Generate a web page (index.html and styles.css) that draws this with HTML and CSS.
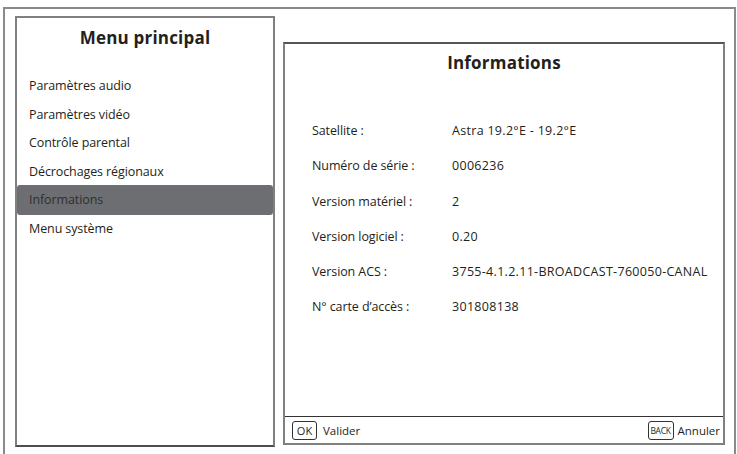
FILE: index.html
```html
<!DOCTYPE html>
<html lang="fr">
<head>
<meta charset="utf-8">
<title>Menu principal</title>
<link rel="stylesheet" href="styles.css">
</head>
<body>
<div class="frame">
  <div class="menu-panel">
    <div class="menu-title">Menu principal</div>
    <ul class="menu-list">
      <li class="menu-item">Paramètres audio</li>
      <li class="menu-item">Paramètres vidéo</li>
      <li class="menu-item">Contrôle parental</li>
      <li class="menu-item">Décrochages régionaux</li>
      <li class="menu-item active">Informations</li>
      <li class="menu-item">Menu système</li>
    </ul>
  </div>
  <div class="info-panel">
    <div class="info-body">
      <div class="info-title">Informations</div>
      <div class="rows">
        <div class="row"><span class="label">Satellite :</span><span class="value">Astra 19.2°E - 19.2°E</span></div>
        <div class="row"><span class="label">Numéro de série :</span><span class="value">0006236</span></div>
        <div class="row"><span class="label">Version matériel :</span><span class="value">2</span></div>
        <div class="row"><span class="label">Version logiciel :</span><span class="value">0.20</span></div>
        <div class="row"><span class="label">Version ACS :</span><span class="value">3755-4.1.2.11-BROADCAST-760050-CANAL</span></div>
        <div class="row"><span class="label">N° carte d’accès :</span><span class="value">301808138</span></div>
      </div>
    </div>
    <div class="footer">
      <div class="action"><span class="key key-ok">OK</span><span class="action-label">Valider</span></div>
      <div class="action"><span class="key key-back">BACK</span><span class="action-label">Annuler</span></div>
    </div>
  </div>
</div>
</body>
</html>
```
FILE: styles.css
```css
html, body {
  margin: 0;
  padding: 0;
  background: #ffffff;
}
body {
  font-family: "Open Sans", "Liberation Sans", sans-serif;
  color: #231f20;
  width: 737px;
  height: 454px;
  overflow: hidden;
}
.frame {
  box-sizing: border-box;
  margin: 7px 0 0 3px;
  width: 733px;
  height: 460px;
  border: 2px solid #8a8a8a;
  border-bottom: none;
  display: flex;
  align-items: flex-start;
  gap: 8px;
  padding: 7px 0 0 10px;
}
.menu-panel {
  box-sizing: border-box;
  width: 260px;
  height: 431px;
  border: 2px solid #808080;
  border-bottom-color: #4d4d4d;
}
.menu-title {
  font-weight: 700;
  font-size: 17px;
  text-align: center;
  height: 40px;
  line-height: 40px;
  letter-spacing: 0.2px;
}
.menu-list {
  list-style: none;
  margin: 0;
  padding: 14px 0 0 0;
}
.menu-item {
  font-size: 12.5px;
  height: 28.5px;
  line-height: 28.5px;
  padding-left: 12px;
  letter-spacing: -0.1px;
}
.menu-item.active {
  background: #6d6e71;
  color: #2e2e30;
  border-radius: 3px;
  height: 30px;
  line-height: 30px;
  margin: -1.5px 0 0 0;
}
.info-panel {
  box-sizing: border-box;
  margin-top: 26px;
  width: 442px;
  height: 403px;
  border: 2px solid #808080;
  border-top-color: #555;
  display: flex;
  flex-direction: column;
}
.info-body {
  flex: 1;
}
.info-title {
  font-weight: 700;
  font-size: 17px;
  text-align: center;
  height: 38px;
  line-height: 38px;
  letter-spacing: 0.2px;
}
.rows {
  padding-top: 31px;
}
.row {
  display: flex;
  height: 35.3px;
  line-height: 35.3px;
  font-size: 12.5px;
  padding-left: 27px;
  letter-spacing: -0.1px;
}
.label {
  width: 140px;
}
.value {
  letter-spacing: 0.3px;
}
.footer {
  height: 26px;
  border-top: 1px solid #333;
  display: flex;
  justify-content: space-between;
  align-items: center;
  padding: 0 3px 0 7px;
  font-size: 11.5px;
}
.action {
  display: flex;
  align-items: center;
  gap: 6px;
}
.key {
  box-sizing: border-box;
  border: 1px solid #333;
  border-radius: 3px;
  height: 19px;
  display: flex;
  align-items: center;
  justify-content: center;
}
.key-ok {
  width: 25px;
  font-size: 11px;
}
.key-back {
  width: 26px;
  font-size: 8.5px;
  letter-spacing: -0.3px;
}
.action-label {
  font-size: 11.5px;
}
.action:last-child {
  gap: 4px;
}
```
